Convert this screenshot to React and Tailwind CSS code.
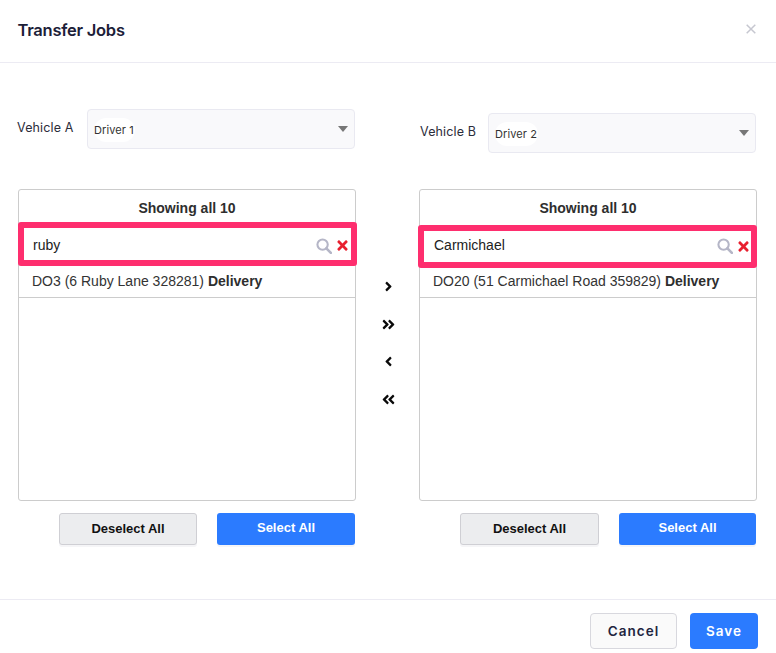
import React from "react";
import { FaAngleRight, FaAngleLeft, FaAngleDoubleRight, FaAngleDoubleLeft, FaTimes } from "react-icons/fa";

function SearchIcon() {
  return (
    <svg width="16" height="16" viewBox="0 0 17 17" fill="none" stroke="#b5b6c7" strokeWidth="2.2" strokeLinecap="round" aria-hidden="true">
      <circle cx="7" cy="7" r="5.5" />
      <path d="M11 11l4.8 4.8" strokeWidth="2.8" />
    </svg>
  );
}

function CloseIcon() {
  return (
    <svg width="10" height="10" viewBox="0 0 10 10" fill="none" stroke="#c6c7d0" strokeWidth="1.5" aria-hidden="true">
      <path d="M0.7 0.7l8.6 8.6M9.3 0.7l-8.6 8.6" />
    </svg>
  );
}

function Side({ label, driver, query, item, labelW, selectTop, listTop, searchClass, searchH, headH, itemH, inputPad, iconClass, deselectW, selectW }) {
  return (
    <div className="flex w-[339px] flex-col">
      <div className={`flex items-start ${selectTop}`}>
        <span className={`${labelW} pt-[10px] font-['Inter',sans-serif] text-[12.5px] leading-[18px] tracking-[0.15px] text-[#2b2d3a]`}>{label}</span>
        <div className="flex h-10 w-[268px] items-center justify-between rounded border border-[#e9e9f1] bg-[#f9f9fb] pl-[6px] pr-[6px]">
          <span className="mt-[2px] rounded-full bg-white py-[4px] pr-[1px] font-['Inter',sans-serif] text-[11px] leading-4 tracking-[0.1px] text-[#333]">{driver}</span>
          <span className="h-0 w-0 border-x-[5px] border-t-[6px] border-x-transparent border-t-[#777]" />
        </div>
      </div>
      <div className={`${listTop} flex h-[312px] w-[338px] flex-col rounded-[3px] border border-[#cccccc] font-['Liberation_Sans',sans-serif]`}>
        <div className={`${headH} pt-[10px] text-center text-[14px] font-bold leading-4 text-[#2e2e2e]`}>Showing all 10</div>
        <div className={`${searchClass} ${searchH} flex items-center rounded-[3px] border-[6px] border-[#fe2e6e] bg-white`}>
          <span className={`${inputPad} flex-1 text-[14px] leading-4 text-[#222]`}>{query}</span>
          <span className={`${iconClass} flex items-center gap-[3px]`}>
            <SearchIcon />
            <FaTimes className="text-[15px] text-[#e8202f]" />
          </span>
        </div>
        <div className={`${itemH} flex items-center border-b border-[#cccccc] pl-[13px] text-[14px] text-[#333]`}>
          <span>{item} <b className="font-bold text-[#2e2e2e]">Delivery</b></span>
        </div>
      </div>
      <div className="mt-3 flex justify-end gap-5 pr-[2px] font-['Liberation_Sans',sans-serif] text-[13px] font-bold">
        <button className={`h-8 ${deselectW} rounded-[3px] border border-[#cfcfd4] bg-[#ecedef] text-[#111] shadow-[0_2px_0_#f5f5f7]`}>Deselect All</button>
        <button className={`h-8 ${selectW} rounded-[3px] bg-[#2b7bff] pb-[3px] text-white shadow-[0_2px_0_#f5f5f7]`}>Select All</button>
      </div>
    </div>
  );
}

export default function App() {
  return (
    <div className="flex h-[653px] w-[776px] flex-col overflow-hidden bg-white">
      <header className="flex h-[63px] shrink-0 items-center justify-between border-b border-[#ecebf3] pl-[18px] pr-[20px]">
        <h1 className="mb-[2px] -ml-[0.5px] font-['Inter',sans-serif] text-[16.5px] font-semibold tracking-[-0.25px] text-[#1c2038]">Transfer Jobs</h1>
        <span className="mb-[4px]"><CloseIcon /></span>
      </header>

      <main className="flex flex-1 pl-[18px]">
        <Side
          label="Vehicle A"
          driver="Driver 1"
          query="ruby"
          item="DO3 (6 Ruby Lane 328281)"
          labelW="w-[69px] -ml-px mr-px"
          selectTop="mt-[46px]"
          listTop="mt-10"
          searchClass="-ml-px mr-[-2px]"
          searchH="h-[44px]"
          headH="h-[32px]"
          itemH="h-[32px]"
          inputPad="pl-[9px] pt-[1px]"
          iconClass="mr-[1px] mt-[3px]"
          deselectW="w-[138px]"
          selectW="w-[138px]"
        />
        <div className="flex w-[62px] flex-col items-center gap-[22.5px] pt-[216px] text-[15px] text-[#0a0a0a]">
          <FaAngleRight />
          <FaAngleDoubleRight />
          <FaAngleLeft />
          <FaAngleDoubleLeft />
        </div>
        <Side
          label="Vehicle B"
          driver="Driver 2"
          query="Carmichael"
          item="DO20 (51 Carmichael Road 359829)"
          labelW="w-[68px] ml-px"
          selectTop="mt-[50px]"
          listTop="mt-9"
          searchClass="-ml-[2px] -mr-px"
          searchH="h-[43px]"
          headH="h-[35px]"
          itemH="h-[30px] pb-[2px]"
          inputPad="pl-[10px] pb-[3px]"
          iconClass="mb-[1px]"
          deselectW="w-[139px]"
          selectW="w-[137px]"
        />
      </main>

      <footer className="flex h-[54px] shrink-0 items-start justify-end gap-[13px] border-t border-[#ecebf3] pr-[18px] pt-[13px] font-['Inter',sans-serif] text-[13.5px] font-semibold tracking-[1px]">
        <button className="h-9 w-[87px] rounded border border-[#d8d8de] bg-[#fafafa] text-[#22253f]">Cancel</button>
        <button className="h-9 w-[68px] rounded bg-[#2b7bff] text-white">Save</button>
      </footer>
    </div>
  );
}
